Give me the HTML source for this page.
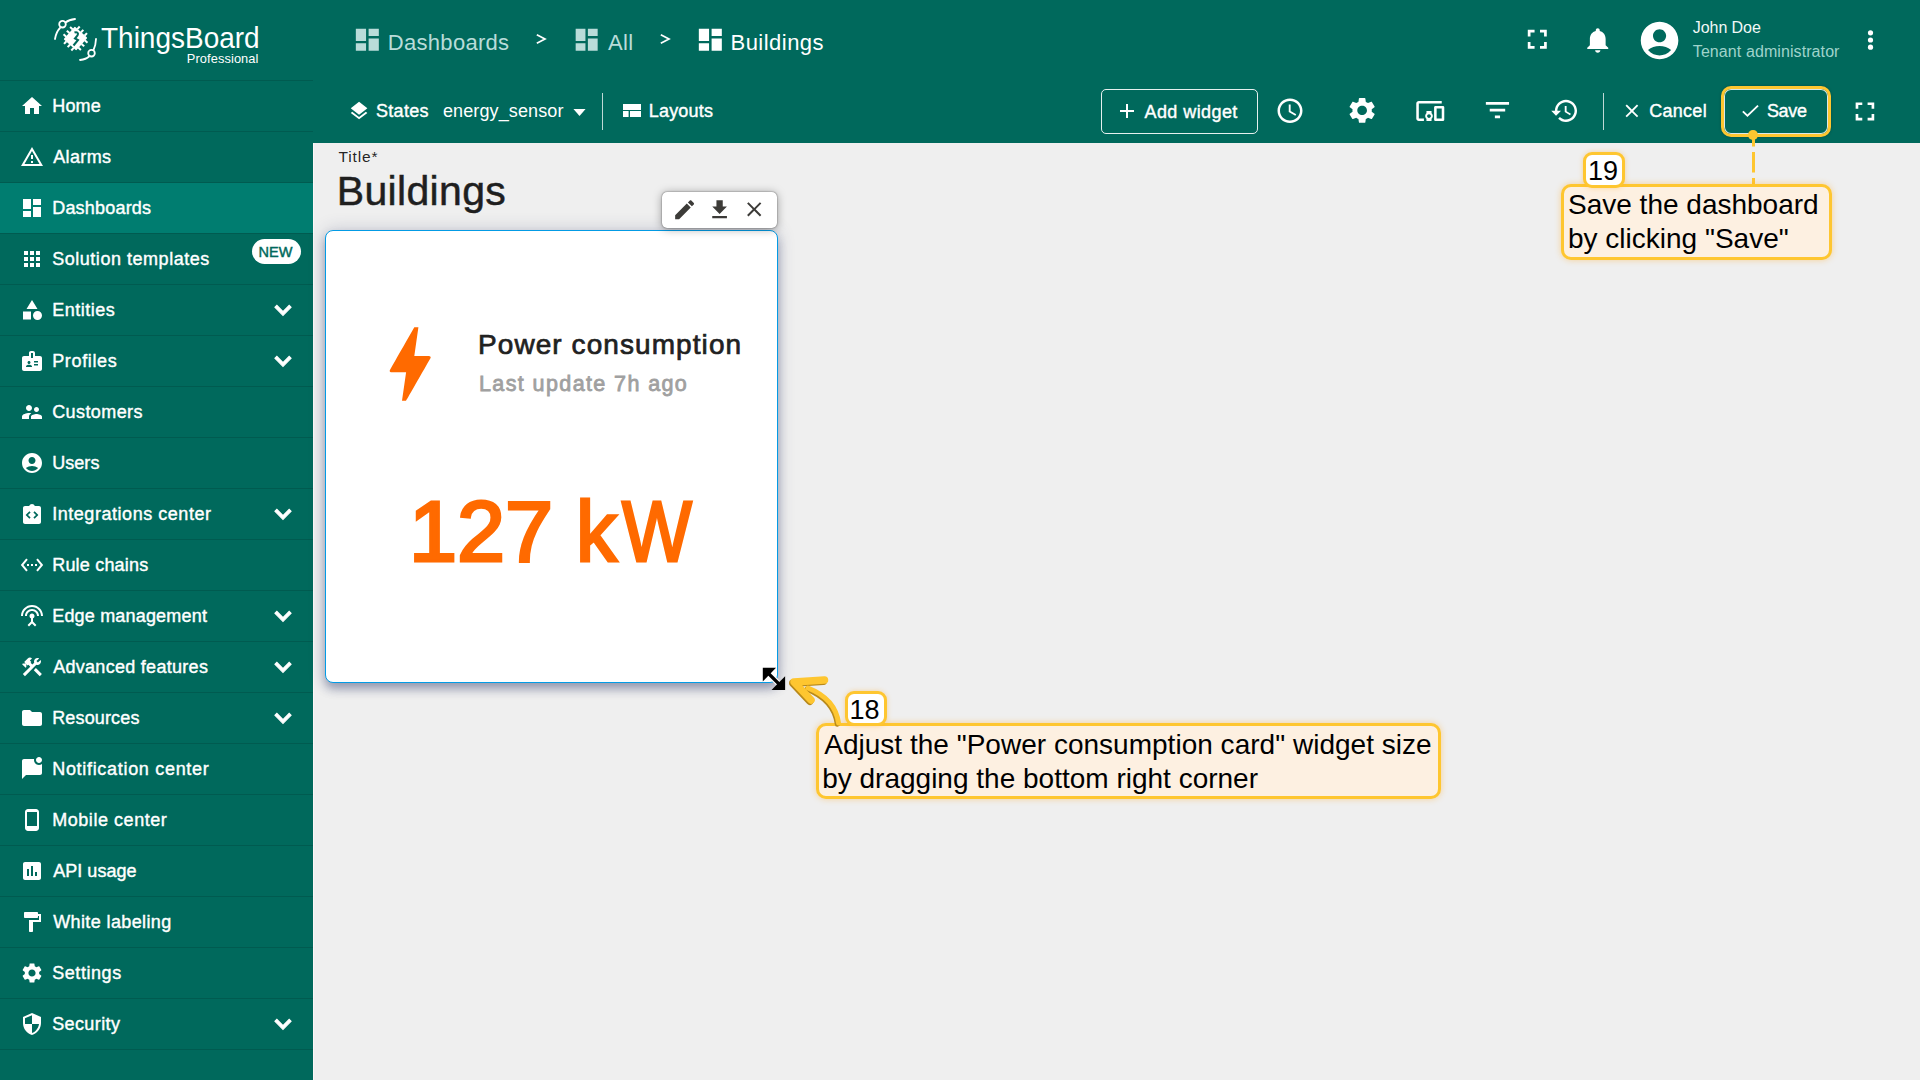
<!DOCTYPE html>
<html><head><meta charset="utf-8"><style>
html,body{margin:0;padding:0;}
body{width:1920px;height:1080px;overflow:hidden;position:relative;background:#efefef;font-family:"Liberation Sans",sans-serif;}
.t{position:absolute;white-space:pre;}
.i{position:absolute;overflow:visible;}
.a{position:absolute;}
</style></head><body>

<div class="a" style="left:0;top:0;width:313px;height:1080px;background:#00695c"></div>
<div class="a" style="left:313px;top:0;width:1607px;height:143px;background:#00695c"></div>
<div class="a" style="left:313px;top:143px;width:1px;height:937px;background:#fcf7f7"></div>
<div class="a" style="left:0;top:183px;width:313px;height:50px;background:#007d70"></div>
<div class="a" style="left:0;top:80px;width:313px;height:1px;background:rgba(0,0,0,0.13)"></div>
<div class="a" style="left:0;top:131px;width:313px;height:1px;background:rgba(0,0,0,0.13)"></div>
<div class="a" style="left:0;top:182px;width:313px;height:1px;background:rgba(0,0,0,0.13)"></div>
<div class="a" style="left:0;top:233px;width:313px;height:1px;background:rgba(0,0,0,0.13)"></div>
<div class="a" style="left:0;top:284px;width:313px;height:1px;background:rgba(0,0,0,0.13)"></div>
<div class="a" style="left:0;top:335px;width:313px;height:1px;background:rgba(0,0,0,0.13)"></div>
<div class="a" style="left:0;top:386px;width:313px;height:1px;background:rgba(0,0,0,0.13)"></div>
<div class="a" style="left:0;top:437px;width:313px;height:1px;background:rgba(0,0,0,0.13)"></div>
<div class="a" style="left:0;top:488px;width:313px;height:1px;background:rgba(0,0,0,0.13)"></div>
<div class="a" style="left:0;top:539px;width:313px;height:1px;background:rgba(0,0,0,0.13)"></div>
<div class="a" style="left:0;top:590px;width:313px;height:1px;background:rgba(0,0,0,0.13)"></div>
<div class="a" style="left:0;top:641px;width:313px;height:1px;background:rgba(0,0,0,0.13)"></div>
<div class="a" style="left:0;top:692px;width:313px;height:1px;background:rgba(0,0,0,0.13)"></div>
<div class="a" style="left:0;top:743px;width:313px;height:1px;background:rgba(0,0,0,0.13)"></div>
<div class="a" style="left:0;top:794px;width:313px;height:1px;background:rgba(0,0,0,0.13)"></div>
<div class="a" style="left:0;top:845px;width:313px;height:1px;background:rgba(0,0,0,0.13)"></div>
<div class="a" style="left:0;top:896px;width:313px;height:1px;background:rgba(0,0,0,0.13)"></div>
<div class="a" style="left:0;top:947px;width:313px;height:1px;background:rgba(0,0,0,0.13)"></div>
<div class="a" style="left:0;top:998px;width:313px;height:1px;background:rgba(0,0,0,0.13)"></div>
<div class="a" style="left:0;top:1049px;width:313px;height:1px;background:rgba(0,0,0,0.13)"></div>
<svg class="i" style="left:20px;top:94px;width:24px;height:24px;" viewBox="0 0 24 24" preserveAspectRatio="none"><path fill="#ffffff" d="M10 20v-6h4v6h5v-8h3L12 3 2 12h3v8z"/></svg>
<svg class="i" style="left:20px;top:145px;width:24px;height:24px;" viewBox="0 0 24 24" preserveAspectRatio="none"><path fill="#ffffff" d="M12 5.99L19.53 19H4.47L12 5.99M12 2L1 21h22L12 2zm1 14h-2v2h2v-2zm0-6h-2v4h2v-4z"/></svg>
<svg class="i" style="left:20px;top:196px;width:24px;height:24px;" viewBox="0 0 24 24" preserveAspectRatio="none"><path fill="#ffffff" d="M3 13h8V3H3v10zm0 8h8v-6H3v6zm10 0h8V11h-8v10zm0-18v6h8V3h-8z"/></svg>
<svg class="i" style="left:20px;top:247px;width:24px;height:24px;" viewBox="0 0 24 24" preserveAspectRatio="none"><path fill="#ffffff" d="M4 8h4V4H4v4zm6 12h4v-4h-4v4zm-6 0h4v-4H4v4zm0-6h4v-4H4v4zm6 0h4v-4h-4v4zm6-10v4h4V4h-4zm-6 4h4V4h-4v4zm6 6h4v-4h-4v4zm0 6h4v-4h-4v4z"/></svg>
<svg class="i" style="left:20px;top:298px;width:24px;height:24px;" viewBox="0 0 24 24" preserveAspectRatio="none"><path fill="#ffffff" d="M12 2l-5.5 9h11zM17.5 13a4.5 4.5 0 1 0 0 9a4.5 4.5 0 1 0 0-9zM3 13.5h8v8H3z"/></svg>
<svg class="i" style="left:266.8px;top:294px;width:32px;height:32px;" viewBox="0 0 24 24" preserveAspectRatio="none"><path stroke="#fff" stroke-width="0.9" fill="#ffffff" d="M16.59 8.59L12 13.17 7.41 8.59 6 10l6 6 6-6z"/></svg>
<svg class="i" style="left:20px;top:349px;width:24px;height:24px;" viewBox="0 0 24 24" preserveAspectRatio="none"><path fill="#ffffff" d="M20 7h-5V4c0-1.1-.9-2-2-2h-2c-1.1 0-2 .9-2 2v3H4c-1.1 0-2 .9-2 2v11c0 1.1.9 2 2 2h16c1.1 0 2-.9 2-2V9c0-1.1-.9-2-2-2zM9 12c.83 0 1.5.67 1.5 1.5S9.830 15 9 15s-1.5-.67-1.5-1.5S8.17 12 9 12zm3 6H6v-.43c0-.6.36-1.15.92-1.39.64-.28 1.34-.43 2.08-.43s1.44.15 2.08.43c.55.24.92.78.92 1.39V18zm1-9h-2V4h2v5zm5 7.5h-4V15h4v1.5zm0-3h-4V12h4v1.5z"/></svg>
<svg class="i" style="left:266.8px;top:345px;width:32px;height:32px;" viewBox="0 0 24 24" preserveAspectRatio="none"><path stroke="#fff" stroke-width="0.9" fill="#ffffff" d="M16.59 8.59L12 13.17 7.41 8.59 6 10l6 6 6-6z"/></svg>
<svg class="i" style="left:20px;top:400px;width:24px;height:24px;" viewBox="0 0 24 24" preserveAspectRatio="none"><path fill="#ffffff" d="M16.5 12c1.38 0 2.49-1.12 2.49-2.5S17.88 7 16.5 7C15.12 7 14 8.12 14 9.5s1.12 2.5 2.5 2.5zM9 11c1.66 0 2.99-1.34 2.99-3S10.66 5 9 5C7.34 5 6 6.34 6 8s1.34 3 3 3zm7.5 3c-1.83 0-5.5.92-5.5 2.750V19h11v-2.25c0-1.83-3.67-2.75-5.5-2.75zM9 13c-2.34 0-7 1.17-7 3.5V19h7v-2.25c0-.85.33-2.34 2.37-3.47C10.5 13.1 9.66 13 9 13z"/></svg>
<svg class="i" style="left:20px;top:451px;width:24px;height:24px;" viewBox="0 0 24 24" preserveAspectRatio="none"><path fill="#ffffff" d="M12 2C6.48 2 2 6.48 2 12s4.48 10 10 10 10-4.48 10-10S17.52 2 12 2zm0 4c1.93 0 3.5 1.57 3.5 3.5S13.93 13 12 13s-3.5-1.57-3.5-3.5S10.07 6 12 6zm0 14c-2.03 0-4.43-.82-6.14-2.88C7.55 15.8 9.68 15 12 15s4.45.8 6.14 2.12C16.43 19.18 14.030 20 12 20z"/></svg>
<svg class="i" style="left:20px;top:502px;width:24px;height:24px;" viewBox="0 0 24 24" preserveAspectRatio="none"><path fill="#ffffff" d="M19 4h-4.18C14.4 2.84 13.3 2 12 2s-2.4.84-2.82 2H5c-1.1 0-2 .9-2 2v14c0 1.1.9 2 2 2h14c1.1 0 2-.9 2-2V6c0-1.1-.9-2-2-2zM10.6 15.6 9.4 16.8 5.6 13l3.8-3.8 1.2 1.2L8 13zm4 1.2-1.2-1.2L16 13l-2.6-2.6 1.2-1.2 3.8 3.8z"/></svg>
<svg class="i" style="left:266.8px;top:498px;width:32px;height:32px;" viewBox="0 0 24 24" preserveAspectRatio="none"><path stroke="#fff" stroke-width="0.9" fill="#ffffff" d="M16.59 8.59L12 13.17 7.41 8.59 6 10l6 6 6-6z"/></svg>
<svg class="i" style="left:20px;top:553px;width:24px;height:24px;" viewBox="0 0 24 24" preserveAspectRatio="none"><path fill="#ffffff" d="M7.77 6.76L6.23 5.48.82 12l5.41 6.52 1.54-1.28L3.42 12l4.35-5.24zM7 13h2v-2H7v2zm10-2h-2v2h2v-2zm-6 2h2v-2h-2v2zm6.77-7.52l-1.54 1.28L20.58 12l-4.35 5.24 1.54 1.28L23.18 12l-5.41-6.52z"/></svg>
<svg class="i" style="left:20px;top:604px;width:24px;height:24px;" viewBox="0 0 24 24" preserveAspectRatio="none"><path fill="#ffffff" d="M12 5c-3.87 0-7 3.13-7 7h2c0-2.76 2.24-5 5-5s5 2.24 5 5h2c0-3.87-3.13-7-7-7zm1 9.29c.88-.39 1.5-1.26 1.5-2.29 0-1.38-1.12-2.5-2.5-2.5S9.5 10.62 9.5 12c0 1.02.62 1.9 1.5 2.29v3.3L7.59 21 9 22.41l3-3 3 3L16.41 21 13 17.59v-3.3zM12 1C5.93 1 1 5.93 1 12h2c0-4.97 4.03-9 9-9s9 4.03 9 9h2c0-6.07-4.93-11-11-11z"/></svg>
<svg class="i" style="left:266.8px;top:600px;width:32px;height:32px;" viewBox="0 0 24 24" preserveAspectRatio="none"><path stroke="#fff" stroke-width="0.9" fill="#ffffff" d="M16.59 8.59L12 13.17 7.41 8.59 6 10l6 6 6-6z"/></svg>
<svg class="i" style="left:20px;top:655px;width:24px;height:24px;" viewBox="0 0 24 24" preserveAspectRatio="none"><path fill="#ffffff" d="M13.783 15.172l2.121-2.121 5.996 5.996-2.121 2.121zM17.5 10c1.93 0 3.5-1.57 3.5-3.5 0-.58-.16-1.12-.41-1.6l-2.7 2.7-1.49-1.49 2.7-2.7c-.48-.25-1.02-.41-1.6-.41C15.57 3 14 4.570 14 6.5c0 .41.08.8.21 1.16l-1.85 1.85-1.78-1.78.71-.71-1.41-1.41L12 3.49c-1.17-1.17-3.07-1.17-4.24 0L4.22 7.030l1.41 1.41H2.81l-.71.71 3.54 3.54.71-.71V9.15l1.41 1.41.71-.71 1.78 1.78-7.41 7.41 2.12 2.12L16.34 9.79c.36.13.75.21 1.16.21z"/></svg>
<svg class="i" style="left:266.8px;top:651px;width:32px;height:32px;" viewBox="0 0 24 24" preserveAspectRatio="none"><path stroke="#fff" stroke-width="0.9" fill="#ffffff" d="M16.59 8.59L12 13.17 7.41 8.59 6 10l6 6 6-6z"/></svg>
<svg class="i" style="left:20px;top:706px;width:24px;height:24px;" viewBox="0 0 24 24" preserveAspectRatio="none"><path fill="#ffffff" d="M10 4H4c-1.1 0-1.99.9-1.99 2L2 18c0 1.1.9 2 2 2h16c1.1 0 2-.9 2-2V8c0-1.1-.9-2-2-2h-8l-2-2z"/></svg>
<svg class="i" style="left:266.8px;top:702px;width:32px;height:32px;" viewBox="0 0 24 24" preserveAspectRatio="none"><path stroke="#fff" stroke-width="0.9" fill="#ffffff" d="M16.59 8.59L12 13.17 7.41 8.59 6 10l6 6 6-6z"/></svg>
<svg class="i" style="left:20px;top:757px;width:24px;height:24px;" viewBox="0 0 24 24" preserveAspectRatio="none"><path fill="#ffffff" d="M22 6.98V16c0 1.1-.9 2-2 2H6l-4 4V4c0-1.1.9-2 2-2h10.1c-.06.32-.1.66-.1 1 0 2.76 2.24 5 5 5 1.13 0 2.16-.39 3-1.02zM16 3c0 1.66 1.34 3 3 3s3-1.34 3-3-1.34-3-3-3-3 1.34-3 3z"/></svg>
<svg class="i" style="left:20px;top:808px;width:24px;height:24px;" viewBox="0 0 24 24" preserveAspectRatio="none"><path fill="#ffffff" d="M16 1H8C6.34 1 5 2.34 5 4v16c0 1.66 1.34 3 3 3h8c1.66 0 3-1.34 3-3V4c0-1.66-1.34-3-3-3zm1 17H7V4h10v14z"/></svg>
<svg class="i" style="left:20px;top:859px;width:24px;height:24px;" viewBox="0 0 24 24" preserveAspectRatio="none"><path fill="#ffffff" d="M19 3H5c-1.1 0-2 .9-2 2v14c0 1.1.9 2 2 2h14c1.1 0 2-.9 2-2V5c0-1.1-.9-2-2-2zM9 17H7v-7h2v7zm4 0h-2V7h2v10zm4 0h-2v-4h2v4z"/></svg>
<svg class="i" style="left:20px;top:910px;width:24px;height:24px;" viewBox="0 0 24 24" preserveAspectRatio="none"><path fill="#ffffff" d="M18 4V3c0-.55-.45-1-1-1H5c-.55 0-1 .45-1 1v4c0 .55.45 1 1 1h12c.55 0 1-.45 1-1V6h1v4H9v11c0 .55.45 1 1 1h2c.55 0 1-.45 1-1v-9h8V4h-3z"/></svg>
<svg class="i" style="left:20px;top:961px;width:24px;height:24px;" viewBox="0 0 24 24" preserveAspectRatio="none"><path fill="#ffffff" d="M19.14 12.94c.04-.3.06-.61.06-.94 0-.32-.02-.64-.07-.94l2.03-1.58c.18-.14.23-.41.12-.61l-1.92-3.32c-.12-.22-.37-.29-.59-.22l-2.39.96c-.5-.38-1.03-.7-1.62-.94l-.36-2.54c-.04-.24-.24-.41-.48-.41h-3.84c-.24 0-.43.17-.47.41l-.36 2.54c-.59.24-1.13.57-1.62.94l-2.39-.96c-.22-.08-.47 0-.59.22L2.74 8.87c-.12.21-.08.47.12.61l2.03 1.58c-.05.3-.09.63-.09.94s.02.64.07.94l-2.03 1.58c-.18.14-.23.41-.12.61l1.92 3.32c.12.22.37.29.59.22l2.39-.96c.5.38 1.03.7 1.62.94l.36 2.54c.05.24.24.41.48.41h3.84c.24 0 .44-.17.47-.41l.36-2.54c.59-.24 1.13-.56 1.62-.94l2.39.96c.22.08.47 0 .59-.22l1.92-3.32c.12-.22.07-.47-.12-.61l-2.01-1.58zM12 15.6c-1.98 0-3.6-1.62-3.6-3.6s1.62-3.6 3.6-3.6 3.6 1.62 3.6 3.6-1.62 3.6-3.6 3.6z"/></svg>
<svg class="i" style="left:20px;top:1012px;width:24px;height:24px;" viewBox="0 0 24 24" preserveAspectRatio="none"><path fill="#ffffff" d="M12 1L3 5v6c0 5.55 3.84 10.74 9 12 5.16-1.26 9-6.45 9-12V5l-9-4zm0 10.99h7c-.53 4.12-3.28 7.79-7 8.94V12H5V6.3l7-3.11v8.8z"/></svg>
<svg class="i" style="left:266.8px;top:1008px;width:32px;height:32px;" viewBox="0 0 24 24" preserveAspectRatio="none"><path stroke="#fff" stroke-width="0.9" fill="#ffffff" d="M16.59 8.59L12 13.17 7.41 8.59 6 10l6 6 6-6z"/></svg>
<div class="a" style="left:251.5px;top:239.3px;width:49px;height:25px;border-radius:12.5px;background:#ffffff"></div>
<div class="t" style="left:258.5px;top:244.8px;font-size:14.5px;line-height:14.5px;font-weight:400;-webkit-text-stroke:0.45px #00695c;color:#00695c;letter-spacing:0.1px">NEW</div>
<svg class="i" style="left:352.17px;top:25.33px;width:30.67px;height:29.33px;" viewBox="0 0 24 24" preserveAspectRatio="none"><path fill="#b9dcd9" d="M3 13h8V3H3v10zm0 8h8v-6H3v6zm10 0h8V11h-8v10zm0-18v6h8V3h-8z"/></svg>
<svg class="i" style="left:572.33px;top:25.33px;width:29.33px;height:29.33px;" viewBox="0 0 24 24" preserveAspectRatio="none"><path fill="#b9dcd9" d="M3 13h8V3H3v10zm0 8h8v-6H3v6zm10 0h8V11h-8v10zm0-18v6h8V3h-8z"/></svg>
<svg class="i" style="left:695.17px;top:25.33px;width:30.67px;height:29.33px;" viewBox="0 0 24 24" preserveAspectRatio="none"><path fill="#ffffff" d="M3 13h8V3H3v10zm0 8h8v-6H3v6zm10 0h8V11h-8v10zm0-18v6h8V3h-8z"/></svg>
<svg class="i" style="left:536px;top:34px;width:10px;height:10px" viewBox="0 0 10 10"><path d="M0.8 0.8 L9 5 L0.8 9.2" fill="none" stroke="#ffffff" stroke-width="1.7"/></svg>
<svg class="i" style="left:660px;top:34px;width:10px;height:10px" viewBox="0 0 10 10"><path d="M0.8 0.8 L9 5 L0.8 9.2" fill="none" stroke="#ffffff" stroke-width="1.7"/></svg>
<svg class="i" style="left:1521.21px;top:23.21px;width:32.57px;height:32.57px;" viewBox="0 0 24 24" preserveAspectRatio="none"><path fill="#ffffff" d="M7 14H5v5h5v-2H7v-3zm-2-4h2V7h3V5H5v5zm12 7h-3v2h5v-5h-2v3zM14 5v2h3v3h2V5h-5z"/></svg>
<svg class="i" style="left:1581.75px;top:24.83px;width:31.5px;height:30.4px;" viewBox="0 0 24 24" preserveAspectRatio="none"><path fill="#ffffff" d="M12 22c1.1 0 2-.9 2-2h-4c0 1.1.89 2 2 2zm6-6v-5c0-3.07-1.64-5.64-4.5-6.32V4c0-.83-.67-1.5-1.5-1.5s-1.5.67-1.5 1.5v.68C7.63 5.36 6 7.92 6 11v5l-2 2v1h16v-1l-2-2z"/></svg>
<svg class="i" style="left:1637.24px;top:18.06px;width:45.12px;height:44.88px;" viewBox="0 0 24 24" preserveAspectRatio="none"><path fill="#ffffff" d="M12 2C6.48 2 2 6.48 2 12s4.48 10 10 10 10-4.48 10-10S17.52 2 12 2zm0 4c1.93 0 3.5 1.57 3.5 3.5S13.93 13 12 13s-3.5-1.57-3.5-3.5S10.07 6 12 6zm0 14c-2.03 0-4.43-.82-6.14-2.88C7.55 15.8 9.68 15 12 15s4.45.8 6.14 2.12C16.43 19.18 14.030 20 12 20z"/></svg>
<svg class="i" style="left:1860px;top:25px;width:20px;height:30px" viewBox="0 0 20 30"><circle cx="10.5" cy="7.8" r="2.6" fill="#fff"/><circle cx="10.5" cy="15" r="2.6" fill="#fff"/><circle cx="10.5" cy="22.2" r="2.6" fill="#fff"/></svg>
<svg class="i" style="left:347.63px;top:99.66px;width:22.13px;height:22.02px;" viewBox="0 0 24 24" preserveAspectRatio="none"><path fill="#ffffff" d="M11.99 18.54l-7.37-5.73L3 14.07l9 7 9-7-1.63-1.27-7.38 5.74zM12 16l7.36-5.73L21 9l-9-7-9 7 1.63 1.27L12 16z"/></svg>
<svg class="i" style="left:564.83px;top:95.0px;width:29.04px;height:33.6px;" viewBox="0 0 24 24" preserveAspectRatio="none"><path fill="#ffffff" d="M7 10l5 5 5-5z"/></svg>
<div class="a" style="left:602px;top:93px;width:1px;height:37px;background:rgba(255,255,255,0.75)"></div>
<svg class="i" style="left:623px;top:104px;width:18px;height:13px" viewBox="0 0 18 13"><rect x="0" y="0" width="18" height="6" fill="#fff"/><rect x="0" y="7" width="5.6" height="6" fill="#fff"/><rect x="7" y="7" width="11" height="6" fill="#fff"/></svg>
<div class="a" style="left:1101px;top:89px;width:155px;height:42.5px;border:1px solid rgba(255,255,255,0.9);border-radius:5px"></div>
<svg class="i" style="left:1114.5px;top:99.0px;width:24.0px;height:24.0px;" viewBox="0 0 24 24" preserveAspectRatio="none"><path fill="#ffffff" d="M19 13h-6v6h-2v-6H5v-2h6V5h2v6h6v2z"/></svg>
<svg class="i" style="left:1275.0px;top:96.35px;width:30.0px;height:29.4px;" viewBox="0 0 24 24" preserveAspectRatio="none"><path fill="#ffffff" d="M11.99 2C6.47 2 2 6.48 2 12s4.47 10 9.99 10C17.52 22 22 17.52 22 12S17.52 2 11.99 2zM12 20c-4.42 0-8-3.58-8-8s3.58-8 8-8 8 3.58 8 8-3.58 8-8 8zm.5-13H11v6l5.25 3.15.75-1.23-4.5-2.67z"/></svg>
<svg class="i" style="left:1346.37px;top:95.42px;width:32.26px;height:30.96px;" viewBox="0 0 24 24" preserveAspectRatio="none"><path fill="#ffffff" d="M19.14 12.94c.04-.3.06-.61.06-.94 0-.32-.02-.64-.07-.94l2.03-1.58c.18-.14.23-.41.12-.61l-1.92-3.32c-.12-.22-.37-.29-.59-.22l-2.39.96c-.5-.38-1.03-.7-1.62-.94l-.36-2.54c-.04-.24-.24-.41-.48-.41h-3.84c-.24 0-.43.17-.47.41l-.36 2.54c-.59.24-1.13.57-1.62.94l-2.39-.96c-.22-.08-.47 0-.59.22L2.74 8.87c-.12.21-.08.47.12.61l2.03 1.58c-.05.3-.09.63-.09.94s.02.64.07.94l-2.03 1.58c-.18.14-.23.41-.12.61l1.92 3.32c.12.22.37.29.59.22l2.39-.96c.5.38 1.03.7 1.62.94l.36 2.54c.05.24.24.41.48.41h3.84c.24 0 .44-.17.47-.41l.36-2.54c.59-.24 1.13-.56 1.62-.94l2.39.96c.22.08.47 0 .59-.22l1.92-3.32c.12-.22.07-.47-.12-.61l-2.01-1.58zM12 15.6c-1.98 0-3.6-1.62-3.6-3.6s1.62-3.6 3.6-3.6 3.6 1.62 3.6 3.6-1.62 3.6-3.6 3.6z"/></svg>
<svg class="i" style="left:1414.73px;top:96.0px;width:30.55px;height:30.0px;" viewBox="0 0 24 24" preserveAspectRatio="none"><path fill="#ffffff" d="M3 6h18V4H3c-1.1 0-2 .9-2 2v12c0 1.1.9 2 2 2h4v-2H3V6zm10 6H9v1.78c-.61.55-1 1.33-1 2.22s.39 1.67 1 2.22V20h4v-1.78c.61-.55 1-1.34 1-2.22s-.39-1.67-1-2.22V12zm-2 5.5c-.83 0-1.5-.67-1.5-1.5s.67-1.5 1.5-1.5 1.5.67 1.5 1.5-.67 1.5-1.5 1.5zM22 8h-6c-.5 0-1 .5-1 1v10c0 .5.5 1 1 1h6c.5 0 1-.5 1-1V9c0-.5-.5-1-1-1zm-1 10h-4v-8h4v8z"/></svg>
<svg class="i" style="left:1482.13px;top:94.35px;width:30.93px;height:32.2px;" viewBox="0 0 24 24" preserveAspectRatio="none"><path fill="#ffffff" d="M10 18h4v-2h-4v2zM3 6v2h18V6H3zm3 7h12v-2H6v2z"/></svg>
<svg class="i" style="left:1550.47px;top:95.98px;width:29.49px;height:29.73px;" viewBox="0 0 24 24" preserveAspectRatio="none"><path fill="#ffffff" d="M13 3c-4.97 0-9 4.03-9 9H1l3.89 3.89.07.14L9 12H6c0-3.87 3.13-7 7-7s7 3.13 7 7-3.13 7-7 7c-1.93 0-3.68-.79-4.94-2.06l-1.42 1.42C8.27 19.99 10.51 21 13 21c4.97 0 9-4.03 9-9s-4.03-9-9-9zm-1 5v5l4.28 2.54.72-1.21-3.5-2.08V8H12z"/></svg>
<div class="a" style="left:1603px;top:93px;width:1px;height:37px;background:rgba(255,255,255,0.75)"></div>
<svg class="i" style="left:1621.16px;top:100.06px;width:21.77px;height:21.77px;" viewBox="0 0 24 24" preserveAspectRatio="none"><path fill="#ffffff" d="M19 6.41L17.59 5 12 10.59 6.41 5 5 6.41 10.59 12 5 17.59 6.41 19 12 13.41 17.59 19 19 17.59 13.41 12z"/></svg>
<svg class="i" style="left:1738.8px;top:100.0px;width:22.51px;height:21.48px;" viewBox="0 0 24 24" preserveAspectRatio="none"><path fill="#ffffff" d="M9 16.17L4.83 12l-1.42 1.41L9 19 21 7l-1.41-1.41z"/></svg>
<svg class="i" style="left:1849.06px;top:95.57px;width:31.89px;height:30.86px;" viewBox="0 0 24 24" preserveAspectRatio="none"><path fill="#ffffff" d="M7 14H5v5h5v-2H7v-3zm-2-4h2V7h3V5H5v5zm12 7h-3v2h5v-5h-2v3zM14 5v2h3v3h2V5h-5z"/></svg>
<div class="a" style="left:325px;top:230px;width:451px;height:451px;background:#fff;border:1px solid #039be5;border-radius:8px;box-shadow:0 6px 10px rgba(40,50,100,0.38),0 0 18px rgba(40,50,100,0.2)"></div>
<svg class="i" style="left:360.78px;top:315.23px;width:98.42px;height:98.13px;" viewBox="0 0 24 24" preserveAspectRatio="none"><path fill="#ff6a00" d="M11 21h-1l1-7H7.5c-.58 0-.57-.32-.38-.66.19-.34.05-.08.07-.12C8.48 10.940 10.42 7.54 13 3h1l-1 7h3.5c.49 0 .56.33.47.51l-.07.15C12.96 17.55 11 21 11 21z"/></svg>
<div class="a" style="left:662px;top:191.5px;width:115px;height:36px;background:#fff;border-radius:5px;box-shadow:0 0 1.5px rgba(0,0,0,0.7),0 1px 10px rgba(0,0,0,0.36)"></div>
<svg class="i" style="left:671.64px;top:196.83px;width:25.27px;height:25.33px;" viewBox="0 0 24 24" preserveAspectRatio="none"><path fill="#3c3b38" d="M3 17.25V21h3.75L17.81 9.94l-3.75-3.75L3 17.25zM20.71 7.04c.39-.39.39-1.02 0-1.41l-2.34-2.34c-.39-.39-1.02-.39-1.41 0l-1.83 1.83 3.75 3.75 1.83-1.83z"/></svg>
<svg class="i" style="left:706.75px;top:196.82px;width:25.2px;height:25.41px;" viewBox="0 0 24 24" preserveAspectRatio="none"><path fill="#3c3b38" d="M19 9h-4V3H9v6H5l7 7 7-7zM5 18v2h14v-2H5z"/></svg>
<svg class="i" style="left:741.91px;top:197.16px;width:24.43px;height:24.69px;" viewBox="0 0 24 24" preserveAspectRatio="none"><path fill="#3c3b38" d="M19 6.41L17.59 5 12 10.59 6.41 5 5 6.41 10.59 12 5 17.59 6.41 19 12 13.41 17.59 19 19 17.59 13.41 12z"/></svg>
<svg class="i" style="left:50px;top:14px;width:50px;height:50px" viewBox="0 0 50 50">
<g fill="none" stroke="#fff" stroke-width="1.8" stroke-linecap="round">
<path d="M5 25 C6 19 8 16 10 14"/><circle cx="12.5" cy="10.2" r="3.3"/><path d="M15.5 8.5 C18 6.5 21 5.5 25 5"/>
<path d="M30 46 C34 45.5 37 44.5 39 42.5"/><circle cx="41.5" cy="39.2" r="3.3"/><path d="M43.5 36 C45 33 45.8 30 46 25"/>
</g>
<g transform="rotate(42 25.5 24.5)" fill="#fff">
<rect x="17" y="16" width="17" height="17" rx="1"/>
<rect x="19.6" y="12.8" width="2" height="3.6"/><rect x="24.5" y="12.8" width="2" height="3.6"/><rect x="29.4" y="12.8" width="2" height="3.6"/>
<rect x="19.6" y="32.6" width="2" height="3.6"/><rect x="24.5" y="32.6" width="2" height="3.6"/><rect x="29.4" y="32.6" width="2" height="3.6"/>
<rect x="13.8" y="18.6" width="3.6" height="2"/><rect x="13.8" y="23.5" width="3.6" height="2"/><rect x="13.8" y="28.4" width="3.6" height="2"/>
<rect x="33.6" y="18.6" width="3.6" height="2"/><rect x="33.6" y="23.5" width="3.6" height="2"/><rect x="33.6" y="28.4" width="3.6" height="2"/>
</g>
<path d="M24.5 18.5 C27 17.5 29 19 27.5 21.5 L25 24.5 L28 26 L23.5 31.5" fill="none" stroke="#00695c" stroke-width="2"/>
</svg>
<div class="a" style="left:1721.3px;top:86px;width:109.6px;height:51px;box-sizing:border-box;border:3.4px solid #fec630;border-radius:10px;box-shadow:inset 0 0 0 1px rgba(255,255,255,0.85),0 0 3px rgba(0,0,0,0.25)"></div>
<svg class="i" style="left:1751.8px;top:137px;width:3px;height:48px" viewBox="0 0 3 48"><path d="M1.5 0 V48" stroke="#fec630" stroke-width="3" stroke-dasharray="20.7 5.3" stroke-dashoffset="11.1"/></svg>
<div class="a" style="left:1748.3px;top:130px;width:9.6px;height:9.6px;border-radius:50%;background:#fec630"></div>
<div class="a" style="left:1561px;top:184px;width:264.5px;height:69.8px;background:#fdf0e1;border:3px solid #fec630;border-radius:10px;box-shadow:0 0 6px rgba(255,170,40,0.45)"></div>
<div class="a" style="left:1583.3px;top:152px;width:36px;height:29.6px;background:#fff;border:3px solid #fec630;border-radius:9px;box-shadow:0 0 5px rgba(255,170,40,0.4)"></div>
<div class="a" style="left:816.2px;top:722.9px;width:618.6px;height:69.8px;background:#fdf0e1;border:3px solid #fec630;border-radius:10px;box-shadow:0 0 6px rgba(255,170,40,0.45)"></div>
<div class="a" style="left:845.4px;top:691.2px;width:35.3px;height:29px;background:#fff;border:3px solid #fec630;border-radius:9px;box-shadow:0 0 5px rgba(255,170,40,0.4)"></div>
<svg class="i" style="left:780px;top:665px;width:70px;height:65px" viewBox="780 665 70 65">
<g transform="translate(-1.2,1.2)" fill="none" stroke="#b8891a" stroke-linecap="round" stroke-linejoin="round">
<path d="M838.5 723 C836.5 708 828 696 808 688" stroke-width="5"/>
<path d="M824.5 680 L794 682 L811 700" stroke-width="7.5"/>
</g>
<g fill="none" stroke="#fec630" stroke-linecap="round" stroke-linejoin="round">
<path d="M838.5 723 C836.5 708 828 696 808 688" stroke-width="5"/>
<path d="M824.5 680 L794 682 L811 700" stroke-width="7.5"/>
</g>
</svg>
<svg class="i" style="left:755px;top:660px;width:40px;height:40px" viewBox="755 660 40 40">
<path d="M768 673 L778 683" stroke="#fff" stroke-width="5.5"/>
<path d="M768 673 L780 685" stroke="#000" stroke-width="3.2"/>
<path d="M762.8 667.8 H776 L762.8 681.4 Z" fill="#000"/>
<path d="M785.1 676.2 V690.1 H771.5 Z" fill="#000"/>
</svg>
<div class="t" style="left:52.2px;top:97.2px;font-size:18px;line-height:18px;font-weight:400;color:#ffffff;letter-spacing:0.200px;-webkit-text-stroke:0.4px #ffffff;">Home</div>
<div class="t" style="left:53.2px;top:148.2px;font-size:18px;line-height:18px;font-weight:400;color:#ffffff;letter-spacing:0.360px;-webkit-text-stroke:0.4px #ffffff;">Alarms</div>
<div class="t" style="left:52.2px;top:199.2px;font-size:18px;line-height:18px;font-weight:400;color:#ffffff;letter-spacing:0.200px;-webkit-text-stroke:0.4px #ffffff;">Dashboards</div>
<div class="t" style="left:52.2px;top:250.2px;font-size:18px;line-height:18px;font-weight:400;color:#ffffff;letter-spacing:0.529px;-webkit-text-stroke:0.4px #ffffff;">Solution templates</div>
<div class="t" style="left:52.2px;top:301.2px;font-size:18px;line-height:18px;font-weight:400;color:#ffffff;letter-spacing:0.514px;-webkit-text-stroke:0.4px #ffffff;">Entities</div>
<div class="t" style="left:52.2px;top:352.2px;font-size:18px;line-height:18px;font-weight:400;color:#ffffff;letter-spacing:0.643px;-webkit-text-stroke:0.4px #ffffff;">Profiles</div>
<div class="t" style="left:52.2px;top:403.2px;font-size:18px;line-height:18px;font-weight:400;color:#ffffff;letter-spacing:0.412px;-webkit-text-stroke:0.4px #ffffff;">Customers</div>
<div class="t" style="left:52.2px;top:454.2px;font-size:18px;line-height:18px;font-weight:400;color:#ffffff;letter-spacing:0.050px;-webkit-text-stroke:0.4px #ffffff;">Users</div>
<div class="t" style="left:52.2px;top:505.2px;font-size:18px;line-height:18px;font-weight:400;color:#ffffff;letter-spacing:0.539px;-webkit-text-stroke:0.4px #ffffff;">Integrations center</div>
<div class="t" style="left:52.2px;top:556.2px;font-size:18px;line-height:18px;font-weight:400;color:#ffffff;letter-spacing:0.200px;-webkit-text-stroke:0.4px #ffffff;">Rule chains</div>
<div class="t" style="left:52.2px;top:607.2px;font-size:18px;line-height:18px;font-weight:400;color:#ffffff;letter-spacing:0.186px;-webkit-text-stroke:0.4px #ffffff;">Edge management</div>
<div class="t" style="left:53.2px;top:658.2px;font-size:18px;line-height:18px;font-weight:400;color:#ffffff;letter-spacing:0.287px;-webkit-text-stroke:0.4px #ffffff;">Advanced features</div>
<div class="t" style="left:52.2px;top:709.2px;font-size:18px;line-height:18px;font-weight:400;color:#ffffff;letter-spacing:0.150px;-webkit-text-stroke:0.4px #ffffff;">Resources</div>
<div class="t" style="left:52.2px;top:760.2px;font-size:18px;line-height:18px;font-weight:400;color:#ffffff;letter-spacing:0.694px;-webkit-text-stroke:0.4px #ffffff;">Notification center</div>
<div class="t" style="left:52.2px;top:811.2px;font-size:18px;line-height:18px;font-weight:400;color:#ffffff;letter-spacing:0.550px;-webkit-text-stroke:0.4px #ffffff;">Mobile center</div>
<div class="t" style="left:53.2px;top:862.2px;font-size:18px;line-height:18px;font-weight:400;color:#ffffff;letter-spacing:0.037px;-webkit-text-stroke:0.4px #ffffff;">API usage</div>
<div class="t" style="left:53.2px;top:913.2px;font-size:18px;line-height:18px;font-weight:400;color:#ffffff;letter-spacing:0.385px;-webkit-text-stroke:0.4px #ffffff;">White labeling</div>
<div class="t" style="left:52.2px;top:964.2px;font-size:18px;line-height:18px;font-weight:400;color:#ffffff;letter-spacing:0.557px;-webkit-text-stroke:0.4px #ffffff;">Settings</div>
<div class="t" style="left:52.2px;top:1015.2px;font-size:18px;line-height:18px;font-weight:400;color:#ffffff;letter-spacing:0.386px;-webkit-text-stroke:0.4px #ffffff;">Security</div>
<div class="t" style="left:387.8px;top:32.0px;font-size:22px;line-height:22px;font-weight:400;color:#b9dcd9;letter-spacing:0.300px;">Dashboards</div>
<div class="t" style="left:608.0px;top:32.0px;font-size:22px;line-height:22px;font-weight:400;color:#b9dcd9;letter-spacing:0.350px;">All</div>
<div class="t" style="left:730.5px;top:32.0px;font-size:22px;line-height:22px;font-weight:400;color:#ffffff;letter-spacing:0.475px;">Buildings</div>
<div class="t" style="left:1692.8px;top:19.9px;font-size:16px;line-height:16px;font-weight:400;color:#f2f8f7;letter-spacing:-0.071px;">John Doe</div>
<div class="t" style="left:1692.8px;top:43.7px;font-size:16px;line-height:16px;font-weight:400;color:#9fd3cb;letter-spacing:0.089px;">Tenant administrator</div>
<div class="t" style="left:376.0px;top:102.2px;font-size:18px;line-height:18px;font-weight:400;color:#ffffff;letter-spacing:0.300px;-webkit-text-stroke:0.4px #ffffff;">States</div>
<div class="t" style="left:443.0px;top:102.0px;font-size:18px;line-height:18px;font-weight:400;color:#ffffff;letter-spacing:0.108px;">energy_sensor</div>
<div class="t" style="left:648.8px;top:102.2px;font-size:18px;line-height:18px;font-weight:400;color:#ffffff;letter-spacing:0.183px;-webkit-text-stroke:0.4px #ffffff;">Layouts</div>
<div class="t" style="left:1144.5px;top:102.6px;font-size:18px;line-height:18px;font-weight:400;color:#ffffff;letter-spacing:0.422px;-webkit-text-stroke:0.4px #ffffff;">Add widget</div>
<div class="t" style="left:1649.3px;top:101.7px;font-size:18px;line-height:18px;font-weight:400;color:#ffffff;letter-spacing:0.260px;-webkit-text-stroke:0.4px #ffffff;">Cancel</div>
<div class="t" style="left:1766.9px;top:101.7px;font-size:18px;line-height:18px;font-weight:400;color:#ffffff;letter-spacing:-0.300px;-webkit-text-stroke:0.4px #ffffff;">Save</div>
<div class="t" style="left:338.5px;top:149.0px;font-size:15.5px;line-height:15.5px;font-weight:400;color:rgba(0,0,0,0.87);letter-spacing:0.860px;">Title*</div>
<div class="t" style="left:336.8px;top:171.2px;font-size:41px;line-height:41px;font-weight:400;color:#1f1f1f;letter-spacing:0.325px;-webkit-text-stroke:0.5px #1f1f1f;">Buildings</div>
<div class="t" style="left:478.0px;top:331.4px;font-size:28px;line-height:28px;font-weight:400;color:#212121;letter-spacing:1.075px;-webkit-text-stroke:0.7px #212121;">Power consumption</div>
<div class="t" style="left:479.0px;top:373.6px;font-size:21.5px;line-height:21.5px;font-weight:400;color:#a0a0a0;letter-spacing:1.394px;-webkit-text-stroke:0.8px #a0a0a0;">Last update 7h ago</div>
<div class="t" style="left:408.6px;top:488.7px;font-size:85.5px;line-height:85.5px;font-weight:400;color:#ff6a00;letter-spacing:0.000px;-webkit-text-stroke:3px #ff6a00;transform:scaleX(1.0104);transform-origin:0 0;">127</div>
<div class="t" style="left:575.8px;top:488.7px;font-size:85.5px;line-height:85.5px;font-weight:400;color:#ff6a00;letter-spacing:0.000px;-webkit-text-stroke:3px #ff6a00;transform:scaleX(0.9561);transform-origin:0 0;">k</div>
<div class="t" style="left:621.7px;top:488.7px;font-size:85.5px;line-height:85.5px;font-weight:400;color:#ff6a00;letter-spacing:0.000px;-webkit-text-stroke:3px #ff6a00;transform:scaleX(0.8646);transform-origin:0 0;">W</div>
<div class="t" style="left:100.7px;top:24.0px;font-size:29px;line-height:29px;font-weight:400;color:#ffffff;letter-spacing:0.000px;transform:scaleX(0.9648);transform-origin:0 0;">ThingsBoard</div>
<div class="t" style="left:186.8px;top:52.8px;font-size:12.8px;line-height:12.8px;font-weight:400;color:#ffffff;letter-spacing:0.109px;">Professional</div>
<div class="t" style="left:849.5px;top:696.7px;font-size:27px;line-height:27px;font-weight:400;color:#000000;letter-spacing:0.000px;">18</div>
<div class="t" style="left:824.2px;top:730.7px;font-size:28px;line-height:28px;font-weight:400;color:#000000;letter-spacing:0.017px;">Adjust the &quot;Power consumption card&quot; widget size</div>
<div class="t" style="left:822.2px;top:764.5px;font-size:28px;line-height:28px;font-weight:400;color:#000000;letter-spacing:0.000px;">by dragging the bottom right corner</div>
<div class="t" style="left:1588.0px;top:157.7px;font-size:27px;line-height:27px;font-weight:400;color:#000000;letter-spacing:0.000px;">19</div>
<div class="t" style="left:1568.0px;top:191.2px;font-size:28px;line-height:28px;font-weight:400;color:#000000;letter-spacing:0.000px;">Save the dashboard</div>
<div class="t" style="left:1568.0px;top:225.4px;font-size:28px;line-height:28px;font-weight:400;color:#000000;letter-spacing:0.000px;">by clicking &quot;Save&quot;</div>
</body></html>
